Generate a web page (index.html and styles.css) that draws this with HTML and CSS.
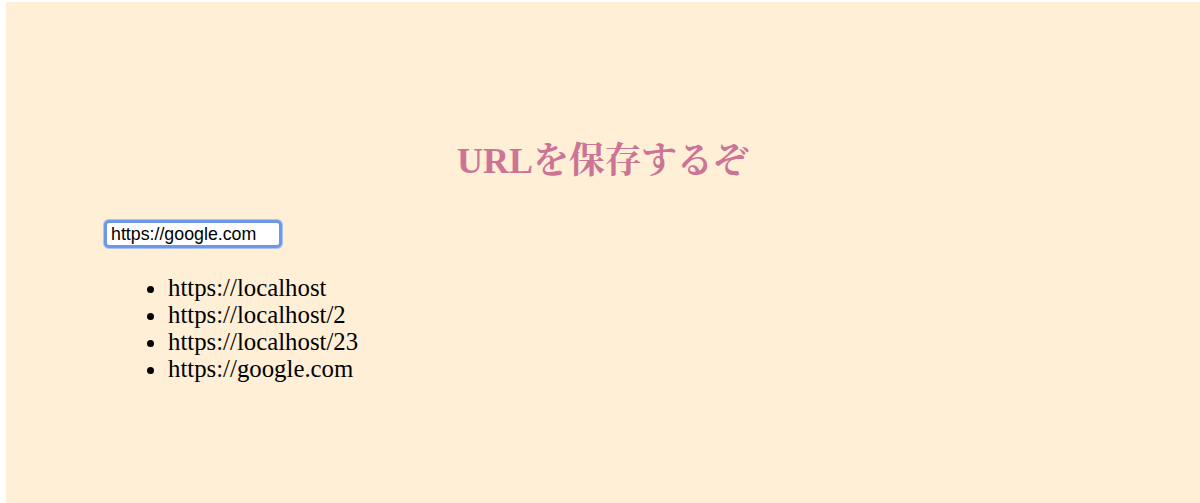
FILE: index.html
```html
<!DOCTYPE html>
<html lang="ja">
<head>
<meta charset="utf-8">
<title>URLを保存するぞ</title>
<link rel="stylesheet" href="styles.css">
</head>
<body>
<main class="page">
  <h1 class="title">URLを保存するぞ</h1>
  <form class="form">
    <input class="url-input" type="text" value="https://google.com">
  </form>
  <ul class="url-list">
    <li>https://localhost</li>
    <li>https://localhost/2</li>
    <li>https://localhost/23</li>
    <li>https://google.com</li>
  </ul>
</main>
</body>
</html>
```

FILE: styles.css
```css
html, body {
  margin: 0;
  height: 100%;
  background: #ffffff;
}
body {
  padding: 2px 0 0 6px;
  box-sizing: border-box;
}
.page {
  box-sizing: border-box;
  height: 100%;
  background: #ffefd6;
  padding: 139px 0 0 0;
  display: flex;
  flex-direction: column;
  font-family: "Liberation Serif", "Noto Serif CJK JP", "Noto Sans CJK JP", serif;
  color: #000;
}
.title {
  margin: 0;
  font-size: 36px;
  line-height: 41px;
  font-weight: bold;
  text-align: center;
  color: #cc7496;
}
.form {
  margin: 38px 0 0 98px;
  display: flex;
}
.url-input {
  box-sizing: border-box;
  width: 178px;
  height: 28px;
  margin: 0;
  padding: 0 0 0 4px;
  border: 3px solid #6d97e8;
  border-radius: 5px;
  box-shadow: 0 0 0 1px #adc4ef;
  background: #fff;
  outline: none;
  font-family: "Liberation Sans", Arial, sans-serif;
  font-size: 17.8px;
  color: #000;
}
.url-list {
  margin: 26px 0 0 122px;
  padding: 0 0 0 40px;
  font-size: 24.8px;
  line-height: 27px;
}
```
